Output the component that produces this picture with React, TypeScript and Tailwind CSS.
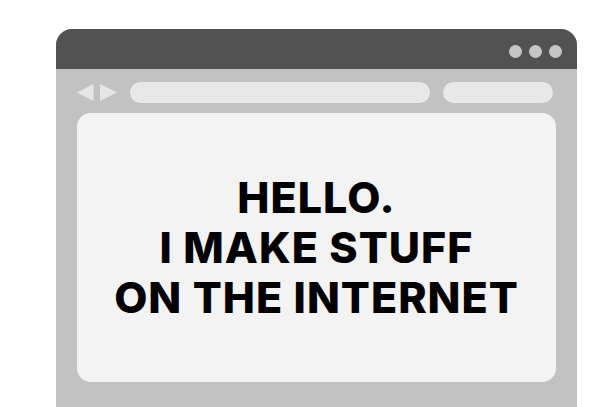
import React from "react";

const Dot = () => <span className="w-[13px] h-[13px] rounded-full bg-[#c6c6c6]" />;

export default function App() {
  return (
    <div className="w-[600px] h-[407px] overflow-hidden bg-white pt-[29px] pl-[56px]">
      <div className="w-[521px] h-[378px] bg-[#c2c2c2] rounded-t-[16px] overflow-hidden flex flex-col">
        {/* Title bar */}
        <div className="h-[40px] bg-[#525252] flex items-center justify-end gap-[7px] pr-[15px] pt-[4px]">
          <Dot />
          <Dot />
          <Dot />
        </div>

        {/* Toolbar */}
        <div className="h-[44px] flex items-start pt-[13px] pl-[21px]">
          <svg width="40" height="21" viewBox="0 0 40 21" aria-hidden="true">
            <polygon points="16.5,2 16.5,19 0,10.5" fill="#e6e6e6" />
            <polygon points="23,2 23,19 40,10.5" fill="#e6e6e6" />
          </svg>
          <div className="ml-[13px] w-[300px] h-[21px] rounded-full bg-[#e8e8e8]" />
          <div className="ml-[13px] w-[110px] h-[21px] rounded-full bg-[#e8e8e8]" />
        </div>

        {/* Page */}
        <div className="mx-[21px] h-[269px] rounded-[14px] bg-[#f3f3f3] flex flex-col items-center justify-center">
          <h1
            className="text-black text-center uppercase font-extrabold text-[43px] leading-[50px] tracking-[1px] pb-[2px]"
            style={{ fontFamily: "Inter, 'Noto Sans', sans-serif" }}
          >
            Hello.
            <br />
            I make stuff
            <br />
            on the internet
          </h1>
        </div>
      </div>
    </div>
  );
}
